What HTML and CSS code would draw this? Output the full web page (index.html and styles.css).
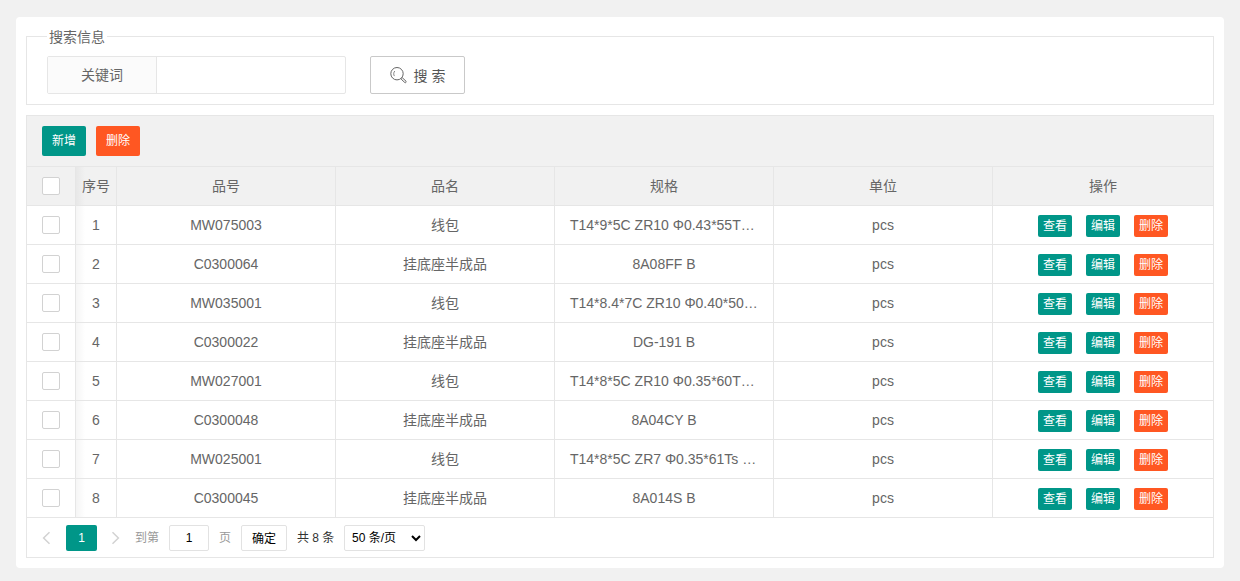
FILE: index.html
```html
<!DOCTYPE html>
<html lang="zh">
<head>
    <meta charset="UTF-8">
    <meta name="viewport" content="width=device-width, initial-scale=1.0">
    <title>品号信息</title>
    <link rel="stylesheet" href="styles.css">
</head>
<body>

<div class="container">

    <!-- 搜索 -->
    <fieldset class="search-box">
        <legend>搜索信息</legend>
        <form class="search-form" onsubmit="return false">
            <div class="form-item">
                <label class="form-label" for="keyword">关键词</label>
                <input class="form-input" type="text" id="keyword" autocomplete="off">
            </div>
            <button class="btn-search" type="submit">
                <svg width="18" height="18" viewBox="0 0 18 18" fill="none" stroke="#666">
                    <circle cx="7" cy="7.7" r="6.2"/>
                    <path d="M4.8 5C3.5 6.3 3.4 8.7 4.4 10.1" stroke-width="0.8"/>
                    <path d="M11.2 13.2L12.5 11.9L16 15.2C16.6 16 15.6 17.2 14.8 16.5Z"/>
                </svg>
                <span>搜 索</span>
            </button>
        </form>
    </fieldset>

    <!-- 数据表格 -->
    <div class="table-view">
        <div class="table-tool">
            <button class="btn btn-sm">新增</button>
            <button class="btn btn-sm btn-danger">删除</button>
        </div>

        <table class="table">
            <colgroup>
                <col class="col-check">
                <col class="col-num">
                <col class="col-data">
                <col class="col-data">
                <col class="col-data">
                <col class="col-data">
                <col>
            </colgroup>
            <thead>
                <tr>
                    <th><i class="checkbox"></i></th>
                    <th class="num">序号</th>
                    <th>品号</th>
                    <th>品名</th>
                    <th>规格</th>
                    <th>单位</th>
                    <th>操作</th>
                </tr>
            </thead>
            <tbody id="rows"></tbody>
        </table>

        <!-- 分页 -->
        <div class="page">
            <a class="page-arrow page-prev">
                <svg width="10" height="14" viewBox="0 0 10 14" fill="none" stroke="#d2d2d2" stroke-width="1.5"><path d="M8.5 1.2L2.6 7L8.5 12.8"/></svg>
            </a>
            <span class="page-curr">1</span>
            <a class="page-arrow page-next">
                <svg width="10" height="14" viewBox="0 0 10 14" fill="none" stroke="#d2d2d2" stroke-width="1.5"><path d="M1.5 1.2L7.4 7L1.5 12.8"/></svg>
            </a>
            <span class="page-skip">到第</span>
            <input class="page-input" type="text" value="1">
            <span class="page-skip">页</span>
            <button class="page-btn">确定</button>
            <span class="page-count">共 8 条</span>
            <select class="page-limits">
                <option>50 条/页</option>
            </select>
        </div>
    </div>

</div>

<script src="script.js"></script>
</body>
</html>
```
FILE: styles.css
```css
* {
    box-sizing: border-box;
}

body {
    margin: 0;
    padding: 17px 16px 13px;
    background-color: #f1f1f1;
    color: #666;
    font: 14px/24px "Liberation Sans", Arial, "Noto Sans CJK SC", sans-serif;
}

button, input, select {
    font-family: inherit;
    outline: none;
}

.container {
    height: 551px;
    padding: 10px;
    background-color: #fff;
    border-radius: 4px;
}

/* 搜索 */
.search-box {
    height: 78px;
    margin: 0 0 10px;
    padding: 0 20px;
    border: 1px solid #e6e6e6;
}

.search-box legend {
    height: 19px;
    padding: 0 2px;
    line-height: 20px;
}

.search-form {
    display: flex;
    gap: 24px;
    padding-top: 10px;
}

.form-item {
    display: flex;
    width: 299px;
    height: 38px;
    border: 1px solid #e6e6e6;
    border-radius: 2px;
}

.form-label {
    width: 109px;
    border-right: 1px solid #e6e6e6;
    background-color: #fbfbfb;
    line-height: 36px;
    text-align: center;
}

.form-input {
    flex: 1;
    min-width: 0;
    padding: 0 10px;
    border: none;
    background: none;
}

.btn-search {
    display: flex;
    align-items: center;
    justify-content: center;
    gap: 6px;
    width: 95px;
    height: 38px;
    padding: 0;
    border: 1px solid #c9c9c9;
    border-radius: 2px;
    background-color: #fff;
    color: #555;
    font-size: 14px;
    cursor: pointer;
}

/* 按钮 */
.btn {
    height: 22px;
    padding: 0 5px;
    border: none;
    border-radius: 2px;
    background-color: #009688;
    color: #fff;
    font-size: 12px;
    line-height: 22px;
    cursor: pointer;
}

.btn-sm {
    height: 30px;
    padding: 0 10px;
    line-height: 30px;
}

.btn-danger {
    background-color: #ff5722;
}

/* 表格 */
.table-view {
    border: 1px solid #e6e6e6;
}

.table-tool {
    display: flex;
    gap: 10px;
    height: 51px;
    padding: 10px 15px;
    border-bottom: 1px solid #e6e6e6;
    background-color: #f1f1f1;
}

.table {
    width: 100%;
    border-collapse: separate;
    border-spacing: 0;
    table-layout: fixed;
}

.col-check {
    width: 49px;
}

.col-num {
    width: 41px;
}

.col-data {
    width: 219px;
}

.table th, .table td {
    height: 39px;
    padding: 0 15px;
    border-right: 1px solid #e6e6e6;
    border-bottom: 1px solid #e6e6e6;
    font-weight: 400;
    line-height: 38px;
    text-align: center;
    white-space: nowrap;
    overflow: hidden;
}

.table th {
    background-color: #f1f1f1;
}

.table th:last-child, .table td:last-child {
    border-right: none;
}

.table .num {
    padding: 0;
    background-image: linear-gradient(to right, rgba(0, 0, 0, 0.04), transparent 9px);
}

.table .long {
    text-align: left;
}

.checkbox {
    display: block;
    width: 18px;
    height: 18px;
    border: 1px solid #d2d2d2;
    border-radius: 2px;
    background-color: #fff;
}

.actions {
    display: flex;
    justify-content: center;
    gap: 14px;
    padding-top: 2px;
}

/* 分页 */
.page {
    display: flex;
    align-items: center;
    height: 39px;
    padding: 0 15px 0 14px;
    font-size: 12px;
}

.page-arrow {
    display: flex;
}

.page-prev {
    margin-right: 15px;
}

.page-next {
    margin: 0 14px;
}

.page-curr {
    width: 31px;
    height: 26px;
    border-radius: 2px;
    background-color: #009688;
    color: #fff;
    line-height: 26px;
    text-align: center;
}

.page-skip {
    color: #999;
}

.page-input {
    width: 40px;
    height: 26px;
    margin: 0 10px;
    padding: 0;
    border: 1px solid #e2e2e2;
    border-radius: 2px;
    font-size: 12px;
    text-align: center;
}

.page-btn {
    width: 46px;
    height: 26px;
    margin: 0 10px;
    padding: 0;
    border: 1px solid #e2e2e2;
    border-radius: 2px;
    background-color: #fff;
    color: #000;
    font-size: 12px;
}

.page-count {
    width: 37px;
    margin-right: 10px;
    color: #333;
    white-space: nowrap;
}

.page-limits {
    width: 81px;
    height: 26px;
    padding: 0 3px;
    border: 1px solid #e2e2e2;
    border-radius: 2px;
    background-color: #fff;
    color: #000;
    font-size: 12px;
}
```
FILE: script.js
```js
var rows = [
    ['MW075003', '线包', 'T14*9*5C ZR10 Φ0.43*55T…'],
    ['C0300064', '挂底座半成品', '8A08FF B'],
    ['MW035001', '线包', 'T14*8.4*7C ZR10 Φ0.40*50…'],
    ['C0300022', '挂底座半成品', 'DG-191 B'],
    ['MW027001', '线包', 'T14*8*5C ZR10 Φ0.35*60T…'],
    ['C0300048', '挂底座半成品', '8A04CY B'],
    ['MW025001', '线包', 'T14*8*5C ZR7 Φ0.35*61Ts …'],
    ['C0300045', '挂底座半成品', '8A014S B']
];

document.getElementById('rows').innerHTML = rows.map(function (row, i) {
    // 过长的规格靠左显示
    var long = row[2].length > 15 ? ' class="long"' : '';
    return '<tr>' +
        '<td><i class="checkbox"></i></td>' +
        '<td class="num">' + (i + 1) + '</td>' +
        '<td>' + row[0] + '</td>' +
        '<td>' + row[1] + '</td>' +
        '<td' + long + '>' + row[2] + '</td>' +
        '<td>pcs</td>' +
        '<td><div class="actions">' +
        '<button class="btn">查看</button>' +
        '<button class="btn">编辑</button>' +
        '<button class="btn btn-danger">删除</button>' +
        '</div></td>' +
        '</tr>';
}).join('');
```
